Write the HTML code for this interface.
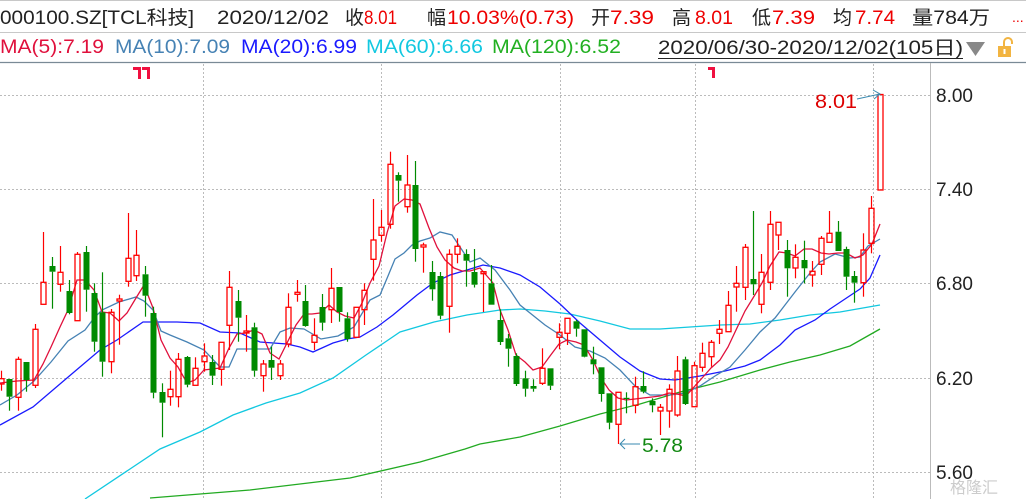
<!DOCTYPE html>
<html><head><meta charset="utf-8"><style>
html,body{margin:0;padding:0;background:#fff;width:1026px;height:499px;overflow:hidden}
svg{display:block}
text{font-family:"Liberation Sans","Noto Sans CJK SC",sans-serif}
</style></head><body>
<svg id="s" width="1026" height="499" viewBox="0 0 1026 499" xmlns="http://www.w3.org/2000/svg">
<rect width="1026" height="499" fill="#fff"/>
<line x1="0" y1="0.5" x2="1026" y2="0.5" stroke="#c8c8c8"/>
<line x1="0" y1="32.5" x2="1026" y2="32.5" stroke="#c8c8c8"/>
<line x1="0" y1="62.5" x2="1026" y2="62.5" stroke="#7a8a96" stroke-width="1.2"/>
<g font-size="19" fill="#222">
<text x="0" y="24" textLength="194" lengthAdjust="spacingAndGlyphs">000100.SZ[TCL科技]</text>
<text x="217" y="24" textLength="112" lengthAdjust="spacingAndGlyphs">2020/12/02</text>
<text x="345" y="24">收</text><text x="364" y="24" fill="#e00" textLength="33" lengthAdjust="spacingAndGlyphs">8.01</text>
<text x="427" y="24">幅</text><text x="447" y="24" fill="#e00" textLength="127" lengthAdjust="spacingAndGlyphs">10.03%(0.73)</text>
<text x="591" y="24">开</text><text x="610" y="24" fill="#e00" textLength="44" lengthAdjust="spacingAndGlyphs">7.39</text>
<text x="672" y="24">高</text><text x="695" y="24" fill="#e00" textLength="38" lengthAdjust="spacingAndGlyphs">8.01</text>
<text x="752" y="24">低</text><text x="772" y="24" fill="#e00" textLength="43" lengthAdjust="spacingAndGlyphs">7.39</text>
<text x="833" y="24">均</text><text x="855" y="24" fill="#e00" textLength="40" lengthAdjust="spacingAndGlyphs">7.74</text>
<text x="912" y="24" textLength="78" lengthAdjust="spacingAndGlyphs">量784万</text>
<text x="1012" y="22" fill="#e00" font-size="14">...</text>
</g>
<g font-size="19">
<text x="0" y="53" fill="#e0103c" textLength="104" lengthAdjust="spacingAndGlyphs">MA(5):7.19</text>
<text x="115" y="53" fill="#4682b4" textLength="115" lengthAdjust="spacingAndGlyphs">MA(10):7.09</text>
<text x="241" y="53" fill="#1a1aff" textLength="116" lengthAdjust="spacingAndGlyphs">MA(20):6.99</text>
<text x="366" y="53" fill="#12c8e0" textLength="117" lengthAdjust="spacingAndGlyphs">MA(60):6.66</text>
<text x="492" y="53" fill="#22b022" textLength="129" lengthAdjust="spacingAndGlyphs">MA(120):6.52</text>
<text x="658" y="54" fill="#222" textLength="305" lengthAdjust="spacingAndGlyphs">2020/06/30-2020/12/02(105日)</text>
</g>
<line x1="658" y1="58.5" x2="963" y2="58.5" stroke="#222"/>
<polygon points="966,42 985,42 975.5,56" fill="#888"/>
<rect x="998" y="46" width="13" height="11" fill="#f2b441"/>
<path d="M1004 46 v-4 a4 4 0 0 1 8 0 v2" fill="none" stroke="#f2b441" stroke-width="2"/>
<rect x="1003.5" y="49" width="2" height="5" fill="#fff"/>
<g stroke="#bbb" stroke-dasharray="2,2" stroke-width="1">
<line x1="0" y1="95.5" x2="930" y2="95.5"/><line x1="0" y1="189.5" x2="930" y2="189.5"/>
<line x1="0" y1="283.5" x2="930" y2="283.5"/><line x1="0" y1="378.5" x2="930" y2="378.5"/>
<line x1="0" y1="472.5" x2="930" y2="472.5"/>
<line x1="203.5" y1="64" x2="203.5" y2="499"/><line x1="381.5" y1="64" x2="381.5" y2="499"/>
<line x1="560.5" y1="64" x2="560.5" y2="499"/><line x1="695.5" y1="64" x2="695.5" y2="499"/>
<line x1="873.5" y1="64" x2="873.5" y2="499"/>
</g>
<line x1="930.5" y1="63" x2="930.5" y2="499" stroke="#bbb"/>
<g font-size="19" fill="#222">
<text x="936" y="102">8.00</text><text x="936" y="196">7.40</text><text x="936" y="290">6.80</text>
<text x="936" y="385">6.20</text><text x="936" y="479">5.60</text>
</g>
<text x="950" y="493" font-size="16" fill="#ccc">格隆汇</text>
<g fill="#f01040">
<rect x="133" y="67" width="8" height="3"/><rect x="138" y="67" width="3" height="12"/>
<rect x="142" y="67" width="8" height="3"/><rect x="147" y="67" width="3" height="12"/>
<rect x="708" y="67" width="7" height="3"/><rect x="712" y="67" width="3" height="11"/>
</g>
<g id="ma" fill="none" stroke-width="1.3"></g>
<g id="cd"></g>
<text x="815" y="108" font-size="19" fill="#d00" textLength="42" lengthAdjust="spacingAndGlyphs">8.01</text>
<path d="M857 99 L880 94 M873 90 L880 94 L874 99" fill="none" stroke="#3a8ab0" stroke-width="1"/>
<text x="642" y="452" font-size="19" fill="#118811" textLength="41" lengthAdjust="spacingAndGlyphs">5.78</text>
<path d="M640 444 L620 444 M625 439 L620 444 L625 449" fill="none" stroke="#3a8ab0" stroke-width="1"/>
</svg>
<script>
var NS="http://www.w3.org/2000/svg";
function el(p,t,a){var e=document.createElementNS(NS,t);for(var k in a)e.setAttribute(k,a[k]);p.appendChild(e);return e;}
var ma=document.getElementById('ma');
var lines={
"#12c8e0":[[85,499],[160,449],[200,432],[233,415],[266,403],[300,393],[333,378],[366,355],[400,332],[434,322],[467,315],[500,310],[520,309],[545,311],[570,314],[600,321],[630,329],[660,329],[690,327],[720,325],[750,324],[780,320],[810,315],[840,312],[880,305]],
"#22aa22":[[150,498],[250,490],[350,478],[420,462],[465,449],[480,444],[520,437],[560,426],[600,414],[640,404],[680,392],[720,382],[760,370],[790,362],[820,355],[850,346],[880,329]],
"#1a1aff":[[0,425],[33,407],[67,378],[100,350],[117,340],[143,322],[160,322],[177,322],[200,323],[220,332],[240,333],[260,342],[287,344],[300,347],[313,352],[333,343],[347,339],[360,337],[377,327],[393,315],[417,295],[433,283],[450,275],[467,270],[483,265],[500,268],[520,275],[540,287],[560,304],[580,323],[600,340],[620,357],[640,371],[660,379],[675,380],[700,376],[725,371],[745,366],[760,360],[780,345],[795,330],[815,320],[830,309],[845,299],[860,289],[870,278],[880,255]],
"#4682b4":[[0,405],[17,395],[34,381],[51,362],[68,341],[85,330],[94,318],[102,310],[119,302],[136,297],[144,301],[153,310],[161,331],[170,335],[187,342],[204,350],[220,367],[229,367],[237,349],[254,349],[270,349],[280,332],[290,328],[304,329],[321,339],[338,336],[354,327],[370,300],[380,295],[388,276],[395,259],[404,253],[412,245],[420,241],[430,238],[440,232],[452,235],[462,250],[470,262],[480,258],[495,270],[510,290],[520,305],[530,313],[545,325],[560,335],[575,347],[590,351],[605,358],[620,370],[635,386],[650,395],[670,395],[685,393],[700,386],[715,376],[730,367],[745,350],[760,332],[775,318],[785,305],[795,292],[810,273],[820,262],[835,254],[850,258],[860,257],[868,246],[880,239]],
"#e0103c":[[0,383],[17,381],[34,380],[43,364],[51,347],[60,327],[68,310],[77,280],[85,280],[94,290],[102,312],[110,313],[119,321],[127,313],[136,298],[144,285],[153,308],[161,340],[170,358],[178,367],[187,383],[195,380],[204,370],[212,369],[220,368],[229,348],[237,334],[245,333],[254,330],[262,334],[270,353],[279,359],[287,343],[296,325],[304,314],[312,314],[320,313],[329,305],[337,312],[345,316],[354,318],[362,303],[370,283],[379,266],[387,233],[395,206],[404,199],[412,200],[420,204],[429,228],[437,247],[445,260],[454,268],[462,271],[470,271],[480,268],[493,283],[500,310],[508,330],[516,355],[525,362],[533,370],[542,367],[550,356],[559,344],[567,340],[576,342],[584,345],[593,360],[601,378],[609,390],[618,398],[626,400],[635,399],[643,398],[652,397],[660,396],[669,393],[677,394],[686,396],[694,387],[703,377],[711,368],[720,360],[728,347],[736,330],[745,311],[753,298],[762,283],[770,266],[779,252],[787,253],[795,256],[804,249],[812,249],[821,253],[829,254],[838,253],[846,253],[855,258],[863,255],[872,244],[880,224]]
};
for(var c in lines){el(ma,'polyline',{points:lines[c].map(function(p){return p.join(',')}).join(' '),stroke:c});}
var D=[
[378.7,384,370.7,390.7,'r'],[379,396.7,379,410.7,'g'],[359.3,397.3,356.7,410.7,'r'],[362,380,362,391.7,'g'],[329.3,385.3,324,388,'r'],
[282.3,304.3,232,304.3,'r'],[266,271.7,257,308.7,'g'],[272.3,284.3,246,291.7,'r'],[291,313,280,314.3,'g'],[254.3,320.7,252,320.7,'r'],
[252,289.7,246,311.7,'g'],[293,341.7,283.3,351.7,'g'],[312.3,361.7,272.3,376.7,'g'],[312.3,361.7,309,373.3,'r'],[299,301,294.7,344.7,'r'],
[258.3,281.3,213,286.7,'r'],[255.3,275.7,230,281,'r'],[274.3,295.7,266,316.7,'g'],[313,392.7,306.7,398.3,'g'],[392,402.7,383.3,437.3,'g'],
[389.3,396.7,370.7,405.7,'r'],[359.3,396.7,353,407.3,'r'],[357,384.7,356,387.3,'g'],[368.3,385.3,357.3,385.3,'r'],[356,361.7,343.3,371.7,'r'],
[362,375.7,355,385,'g'],[342.3,369.3,342.3,385.7,'r'],[287.3,325.3,271,350,'r'],[301,317.7,290,341.7,'g'],[331,333,315,351.7,'r'],
[327.3,370.7,322.7,376.7,'g'],[364,375.7,360,391.7,'r'],[360,367.7,346.7,380,'g'],[364,375.7,360,380,'r'],[307.3,344,293.3,347.3,'r'],
[292.3,294.3,280,301.7,'r'],[301,326,285,326.7,'g'],[335.3,342.3,318.3,350,'r'],[307,322.7,294,330.7,'g'],[288.3,309.7,268,323,'r'],
[287,312,287,321.7,'g'],[318.3,339,312.3,341.7,'g'],[307.3,337.3,307.3,337.3,'r'],[290.3,309.7,283.3,325,'r'],[240,259.3,199,280.7,'r'],
[227.3,235.3,210,241.7,'r'],[164.3,224.3,151.7,228.7,'r'],[175,180.7,172.3,201.7,'g'],[185,206.7,155,212.7,'r'],[185,249,161,261.7,'g'],
[245,247,242.7,272.7,'r'],[272,289.3,261,300.7,'g'],[276,315.7,272,319.3,'g'],[254.3,306.3,249.3,332.7,'r'],[246.3,254.3,238.3,263.3,'r'],
[254,260.7,249.3,286.7,'g'],[272,284.7,249,287.5,'g'],[271.7,273.7,271.7,312,'r'],[283.3,304.7,265,304.7,'g'],[320,342,309.3,345,'g'],
[338.3,348.7,334,366.7,'g'],[356,384,353.3,386,'g'],[378.3,388.7,370.7,396.7,'g'],[386,388.7,379.3,391.7,'g'],[368.3,383.3,348.3,385,'r'],
[368.3,385.7,368.3,390,'g'],[332.3,337.3,323.3,349.3,'r'],[318.3,333.3,318.3,345,'r'],[321.3,328.7,320,336.7,'g'],[329.3,356.7,329.3,357.3,'g'],
[359.3,364.3,346.7,374.3,'g'],[367.3,394,367.3,401.7,'g'],[393.3,422.7,393.3,429.3,'g'],[392.3,424.3,392.3,444,'r'],[397.8,399,392.3,413.3,'g'],
[386.7,405.3,376.7,413.3,'r'],[386,391.7,371.3,393.3,'g'],[401,405.3,398.3,412.3,'g'],[407.3,411,404,435,'r'],[389.3,411,384.3,427.7,'r'],
[371,415,356,416.7,'r'],[359.3,404,356.7,405,'g'],[365.7,406.7,361.7,406.7,'r'],[353.3,367.3,342.7,371.7,'r'],[342.3,356.7,340,366.7,'r'],
[329.3,333.3,320,344,'r'],[305.3,331.7,291,331.7,'r'],[283.3,287,266,311.7,'r'],[247.3,287.3,244,300,'r'],[279,284.3,211,295,'g'],
[272.3,304.3,254,313.3,'r'],[224.3,282.3,211,290,'r'],[222.3,235,222.3,250,'r'],[250,268.3,240,296.7,'g'],[257.3,268,244.3,278.3,'r'],
[260,268.3,240.7,283.3,'g'],[271.3,275,261,286.7,'r'],[238.3,264.3,236,275,'r'],[233.3,242.3,211,242.3,'r'],[231.7,251,221,251,'g'],
[249,276.7,246.7,290,'g'],[276,282.7,271,302.7,'g'],[250,282.7,233.3,296.7,'r'],[208.3,243.3,196,253.3,'r'],[94.5,190,94.5,190,'r']
];
var cd=document.getElementById('cd');
D.forEach(function(d,i){
 var x=Math.round(1+8.45*i)+0.5, t=d[0],b=d[1],h=d[2],l=d[3];
 var col=d[4]=='r'?'#f00':'#008a00';
 if(h<t)el(cd,'line',{x1:x,y1:h,x2:x,y2:t,stroke:col,'stroke-width':1.2});
 if(l>b)el(cd,'line',{x1:x,y1:b,x2:x,y2:l,stroke:col,'stroke-width':1.2});
 var hh=Math.max(b-t,1.2);
 if(d[4]=='r')el(cd,'rect',{x:x-2.5,y:t,width:5,height:hh,fill:'none',stroke:col,'stroke-width':1.3});
 else el(cd,'rect',{x:x-3,y:t,width:6,height:hh,fill:col});
});
</script>
</body></html>
